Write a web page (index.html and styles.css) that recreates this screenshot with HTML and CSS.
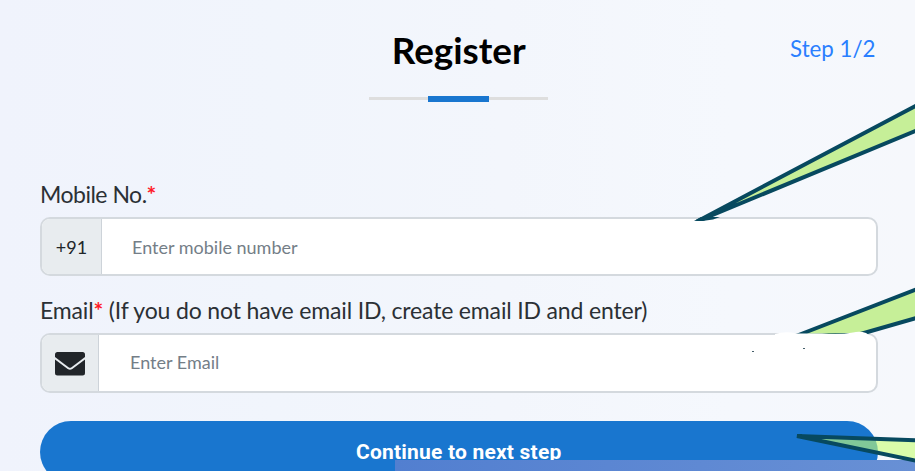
FILE: index.html
```html
<!DOCTYPE html>
<html lang="en">
<head>
<meta charset="utf-8">
<title>Register</title>
<link rel="stylesheet" href="styles.css">
</head>
<body>
<main class="page">
  <header class="header">
    <h1 class="title">Register</h1>
    <span class="step">Step 1/2</span>
  </header>
  <div class="rule"><span class="rule-accent"></span></div>
  <form class="form">
    <label class="label" for="mobile"><span class="label-text label-mobile">Mobile No.</span><span class="required">*</span></label>
    <div class="field">
      <span class="prefix prefix-code">+91</span>
      <input class="input" id="mobile" type="text" placeholder="Enter mobile number">
    </div>
    <label class="label label-email" for="email"><span class="label-text">Email</span><span class="required">*</span><span class="label-text hint"> (If you do not have email ID, create email ID and enter)</span></label>
    <div class="field field-email">
      <span class="prefix prefix-mail">
        <svg class="mail" viewBox="0 0 30 24" aria-hidden="true">
          <path d="M2.5 0h25Q30 0 30 2.5V5L16.5 15.3Q15 16.3 13.5 15.3L0 5V2.5Q0 0 2.5 0Z"/>
          <path d="M0 7.4 12.7 17Q15 18.4 17.3 17L30 7.4V21Q30 23.5 27.5 23.5h-25Q0 23.5 0 21Z"/>
        </svg>
      </span>
      <input class="input input-email" id="email" type="text" placeholder="Enter Email">
    </div>
    <button class="submit" type="button"><span class="submit-text">Continue to next step</span></button>
  </form>
  <div class="band"></div>
  <svg class="callouts" viewBox="0 0 915 471" aria-hidden="true">
    <path class="pointer" d="M920 103.5 697 221.5 920 129Z"/>
    <path class="cover" d="M685 221h30v8h-30Z"/>
    <path class="cover" d="M714 219h12v6h-12Z"/>
    <path class="pointer-dark" d="M694 221 701 217H720L713 219.5 704 220.8Z"/>
    <path class="pointer" d="M920 288 796 336 857 335 920 317Z"/>
    <path class="cover" d="M775 334Q785 331 797 333.5L822 333.5Q840 335 853 332.5Q860 331 866 333L872 337V346H775Z"/>
    <path class="speck" d="M752 351h2v1h-2ZM803 348h2v1h-2Z"/>
    <path class="pointer pointer-glass" d="M920 440.5 797 436 920 461.5Z"/>
  </svg>
</main>
</body>
</html>
```
FILE: styles.css
```css
* { box-sizing: border-box; }
body {
  margin: 0;
  font-family: Lato, "Liberation Sans", sans-serif;
}
.page {
  position: relative;
  width: 915px;
  height: 471px;
  overflow: hidden;
  padding: 0 37.5px 0 40px;
  background: linear-gradient(90deg, #f0f3fc 0%, #f1f5fc 30%, #f3f6fc 55%, #f5f8fd 80%, #f6f8fc 100%);
}
.header {
  display: grid;
  grid-template-columns: 1fr auto 1fr;
  height: 96px;
  padding-top: 29px;
}
.title {
  grid-column: 2;
  margin: 0;
  font-size: 36.8px;
  line-height: 43px;
  font-weight: 700;
  color: #000;
}
.step {
  justify-self: end;
  padding: 6px 2px 0 0;
  font-size: 22.3px;
  line-height: 28px;
  color: #2a7fff;
}
.rule {
  display: flex;
  align-items: center;
  justify-content: center;
  width: 179px;
  height: 5px;
  margin: 0 auto;
  background: linear-gradient(#dedede, #dedede) center / 100% 3px no-repeat;
}
.rule-accent {
  width: 61px;
  height: 6px;
  background: #1976cf;
}
.form { padding-top: 77px; }
.label {
  display: flex;
  height: 39px;
  font-size: 23px;
  line-height: 32px;
  letter-spacing: -0.16px;
  color: #2b3035;
  white-space: pre;
}
.label-mobile { letter-spacing: -0.5px; }
.required { color: #ff1a28; font-weight: 700; }
.field {
  display: flex;
  height: 59px;
  border: 2px solid #d4d9de;
  border-radius: 10px;
  background: #fff;
  overflow: hidden;
}
.label-email { height: 39px; margin-top: 18px; }
.field-email { height: 60px; }
.prefix {
  display: flex;
  align-items: center;
  justify-content: center;
  border-right: 1px solid #cdd3d9;
  background: #e8ecef;
  color: #212529;
}
.prefix-code { width: 60px; font-size: 18px; }
.prefix-mail { width: 57px; padding-top: 2px; }
.mail { width: 30px; height: 24px; fill: #212529; }
.input {
  flex: 1;
  min-width: 0;
  padding: 0 30px;
  border: 0;
  outline: 0;
  background: none;
  font: 18px Lato, "Liberation Sans", sans-serif;
}
.input-email { padding: 0 30px 2px 31px; }
.input::placeholder { color: #747e87; opacity: 1; }
.submit {
  display: block;
  width: 100%;
  height: 62px;
  margin-top: 27.5px;
  padding: 0;
  border: 0;
  border-radius: 31px;
  background: #1976cf;
  color: #fff;
  font: 700 21px/63px Roboto, "Liberation Sans", sans-serif;
  letter-spacing: .2px;
}
.band {
  position: absolute;
  left: 395px;
  right: 0;
  bottom: 0;
  height: 11px;
  background: linear-gradient(90deg, #527fd0, #6890d5);
}
.callouts {
  position: absolute;
  inset: 0;
  width: 915px;
  height: 471px;
  pointer-events: none;
}
.pointer { fill: #c6ef98; stroke: #07495f; stroke-width: 4; stroke-linejoin: bevel; }
.pointer-glass { fill: rgba(198, 255, 115, .6); }
.pointer-dark { fill: #07495f; }
.cover { fill: #fff; }
.speck { fill: #46606b; }
```
